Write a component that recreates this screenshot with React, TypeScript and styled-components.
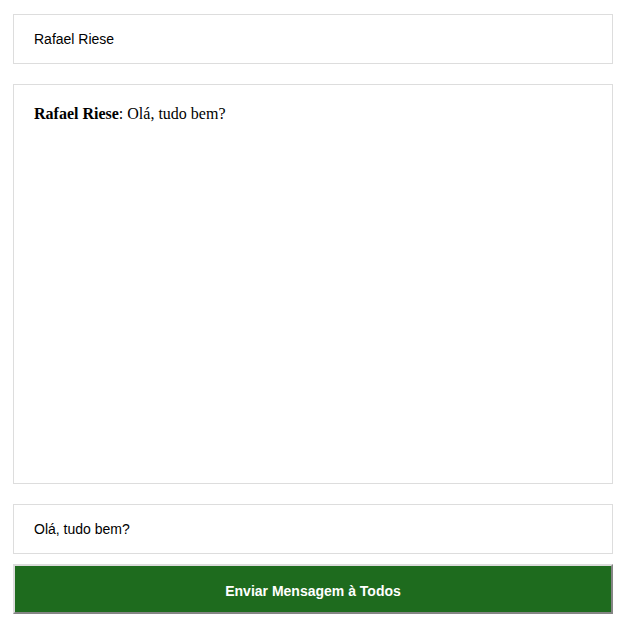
import React from "react";
import styled, { createGlobalStyle } from "styled-components";

const Global = createGlobalStyle`
  html, body { margin: 0; padding: 0; background: #fff; }
  body { font-family: "Liberation Serif", "Times New Roman", serif; }
`;

const Page = styled.div`
  width: 600px;
  padding: 14px 13px;
  display: flex;
  flex-direction: column;
`;

const Field = styled.input<{ $gapAfter: number }>`
  box-sizing: border-box;
  width: 600px;
  height: 50px;
  margin: 0 0 ${(p) => p.$gapAfter}px 0;
  padding: 0 20px;
  border: 1px solid #ddd;
  background: #fff;
  font-family: "Liberation Sans", Arial, sans-serif;
  font-size: 14px;
  color: #000;
  outline: none;
`;

const ChatBox = styled.div`
  box-sizing: border-box;
  width: 600px;
  height: 400px;
  margin-bottom: 20px;
  padding: 20px;
  border: 1px solid #ddd;
  font-family: "Liberation Serif", "Times New Roman", serif;
  font-size: 16px;
  color: #000;
  overflow-y: auto;
`;

const Message = styled.div`
  line-height: 18px;
`;

const Author = styled.b`
  font-weight: bold;
`;

const SendButton = styled.button`
  box-sizing: border-box;
  width: 600px;
  height: 50px;
  background: #1e6b1e;
  border: 2px solid;
  border-color: #dcdcdc #858585 #858585 #dcdcdc;
  color: #fff;
  font-family: "Liberation Sans", Arial, sans-serif;
  font-size: 14px;
  font-weight: bold;
  cursor: pointer;
  padding: 4px 0 0 0;
`;

export default function App() {
  return (
    <>
      <Global />
      <Page>
        <Field $gapAfter={20} defaultValue="Rafael Riese" />
        <ChatBox>
          <Message>
            <Author>Rafael Riese</Author>: Olá, tudo bem?
          </Message>
        </ChatBox>
        <Field $gapAfter={10} defaultValue="Olá, tudo bem?" />
        <SendButton>Enviar Mensagem à Todos</SendButton>
      </Page>
    </>
  );
}
